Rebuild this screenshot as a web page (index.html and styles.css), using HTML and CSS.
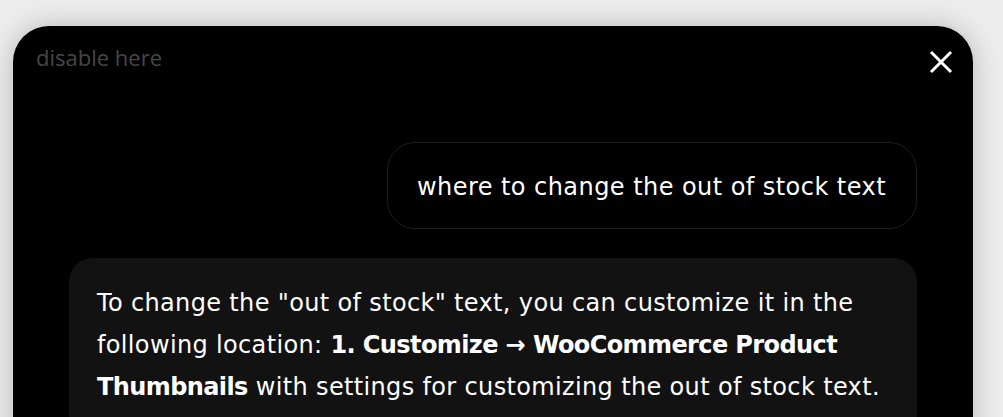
FILE: index.html
```html
<!DOCTYPE html>
<html lang="en">
<head>
<meta charset="utf-8">
<title>Chat</title>
<link rel="stylesheet" href="styles.css">
</head>
<body>
<div class="panel">
  <div class="topbar">
    <span class="disable">disable here</span>
    <svg class="close" width="24" height="24" viewBox="0 0 24 24" aria-label="close">
      <path d="M2 2 L22 22 M22 2 L2 22" stroke="#fff" stroke-width="3" fill="none"/>
    </svg>
  </div>
  <div class="messages">
    <div class="user-row">
      <div class="user-bubble">where to change the out of stock text</div>
    </div>
    <div class="bot-bubble">
      To change the "out of stock" text, you can customize it in the following location: <b>1. Customize → WooCommerce Product Thumbnails</b> with settings for customizing the out of stock text.
    </div>
  </div>
</div>
</body>
</html>
```

FILE: styles.css
```css
html, body {
  margin: 0;
  padding: 0;
  height: 100%;
  overflow: hidden;
}
body {
  background: #ececec;
}
.panel {
  margin: 26px 0 0 13px;
  width: 960px;
  height: 460px;
  background: #000;
  border-radius: 36px 36px 0 0;
  box-shadow: 0 0 26px rgba(0, 0, 0, 0.22);
  box-sizing: border-box;
}
.topbar {
  display: flex;
  justify-content: space-between;
  align-items: flex-start;
  padding: 17px 20px 0 23px;
  height: 72px;
  box-sizing: border-box;
}
.disable {
  font-family: "Open Sans", "Noto Sans", sans-serif;
  font-size: 22px;
  line-height: 28px;
  color: #474747;
}
.close {
  margin-top: 7px;
  display: block;
}
.messages {
  padding: 44px 56px 0;
  font-family: "DejaVu Sans", "Liberation Sans", sans-serif;
  color: #fff;
}
.user-row {
  display: flex;
  justify-content: flex-end;
}
.user-bubble {
  border: 1px solid #1f1f1f;
  border-radius: 28px;
  padding: 30px 30px 27px 29px;
  font-size: 24px;
  line-height: 28px;
  letter-spacing: 0.45px;
}
.bot-bubble {
  margin-top: 29px;
  background: #121212;
  border-radius: 24px;
  padding: 24px 28px 30px;
  font-size: 24px;
  line-height: 42px;
  letter-spacing: 0.35px;
}
.bot-bubble b {
  font-weight: bold;
  letter-spacing: -0.6px;
}
```
